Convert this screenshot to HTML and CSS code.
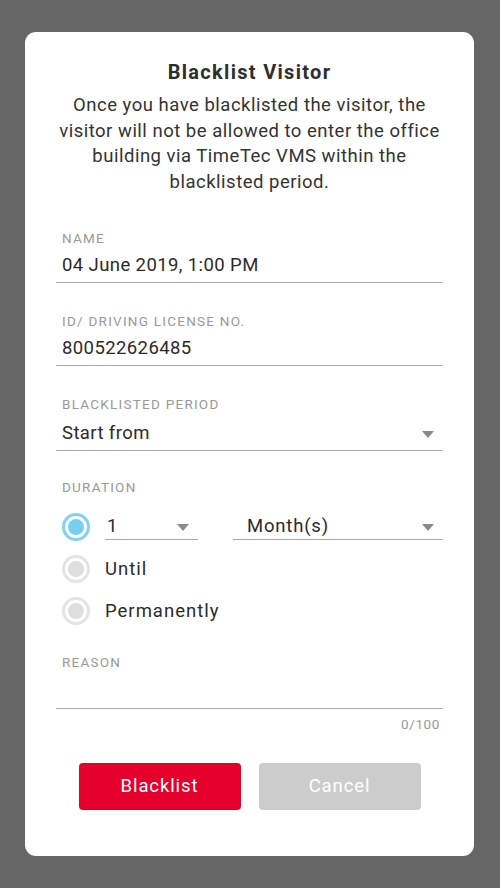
FILE: index.html
```html
<!DOCTYPE html>
<html lang="en">
<head>
<meta charset="utf-8">
<title>Blacklist Visitor</title>
<link rel="stylesheet" href="styles.css">
</head>
<body>
<div class="card">
  <h1 class="title">Blacklist Visitor</h1>
  <p class="intro">Once you have blacklisted the visitor, the<br>visitor will not be allowed to enter the office<br>building via TimeTec VMS within the<br>blacklisted period.</p>

  <div class="field">
    <div class="label">NAME</div>
    <div class="value">04 June 2019, 1:00 PM</div>
  </div>

  <div class="field">
    <div class="label">ID/ DRIVING LICENSE NO.</div>
    <div class="value">800522626485</div>
  </div>

  <div class="field">
    <div class="label">BLACKLISTED PERIOD</div>
    <div class="value select"><span>Start from</span><span class="caret"></span></div>
  </div>

  <div class="field duration">
    <div class="label">DURATION</div>
    <div class="radio-row">
      <span class="radio checked"></span>
      <div class="mini-select num"><span>1</span><span class="caret"></span></div>
      <div class="mini-select unit"><span>Month(s)</span><span class="caret"></span></div>
    </div>
    <div class="radio-row">
      <span class="radio"></span>
      <span class="radio-text">Until</span>
    </div>
    <div class="radio-row">
      <span class="radio"></span>
      <span class="radio-text">Permanently</span>
    </div>
  </div>

  <div class="field reason">
    <div class="label">REASON</div>
    <div class="textarea"></div>
    <div class="counter">0/100</div>
  </div>

  <div class="actions">
    <button class="btn primary">Blacklist</button>
    <button class="btn secondary">Cancel</button>
  </div>
</div>
</body>
</html>
```

FILE: styles.css
```css
html, body {
  margin: 0;
  padding: 0;
}
body {
  background: #666666;
  width: 500px;
  height: 888px;
  overflow: hidden;
  font-family: Roboto, "Liberation Sans", Arial, sans-serif;
  color: #333333;
}
.card {
  box-sizing: border-box;
  width: 449px;
  height: 824px;
  margin: 32px 0 0 25px;
  background: #ffffff;
  border-radius: 11px;
  padding: 28px 31px 0 31px;
}
.title {
  margin: 0;
  font-size: 20px;
  line-height: 24px;
  font-weight: 700;
  text-align: center;
  color: #2e2e2e;
  letter-spacing: 1.3px;
}
.intro {
  margin: 9px -12px 0 -12px;
  font-size: 18.5px;
  line-height: 25.7px;
  text-align: center;
  color: #333333;
  letter-spacing: 0.5px;
  white-space: nowrap;
}
.field {
  margin-top: 30px;
}
.intro + .field {
  margin-top: 34px;
}
.label {
  padding-left: 6px;
  font-size: 13.5px;
  line-height: 16px;
  color: #999999;
  letter-spacing: 1.25px;
}
.value {
  margin-top: 7px;
  font-size: 18.5px;
  line-height: 24px;
  padding: 0 9px 5px 6px;
  border-bottom: 1px solid #aaaaaa;
  color: #2b2b2b;
  letter-spacing: 0.4px;
}
.select {
  display: flex;
  align-items: center;
  justify-content: space-between;
  margin-top: 9px;
}
.caret {
  flex: none;
  width: 0;
  height: 0;
  border-left: 6px solid transparent;
  border-right: 6px solid transparent;
  border-top: 7px solid #8a8a8a;
  margin-top: 3px;
}
.duration {
  margin-top: 28px;
}
.radio-row {
  display: flex;
  align-items: center;
  height: 28px;
  margin-top: 14px;
}
.duration .label + .radio-row {
  margin-top: 18px;
}
.radio {
  box-sizing: border-box;
  flex: none;
  width: 28px;
  height: 28px;
  border-radius: 50%;
  border: 3px solid #e4e4e4;
  margin-left: 6px;
  display: flex;
  align-items: center;
  justify-content: center;
}
.radio::after {
  content: "";
  width: 16px;
  height: 16px;
  border-radius: 50%;
  background: #dedede;
}
.radio.checked {
  border-color: #80d4f2;
}
.radio.checked::after {
  background: #76cff0;
}
.radio-text {
  margin-left: 15px;
  font-size: 18.5px;
  letter-spacing: 1px;
  color: #2b2b2b;
}
.mini-select {
  box-sizing: border-box;
  height: 26px;
  display: flex;
  align-items: center;
  justify-content: space-between;
  border-bottom: 1px solid #aaaaaa;
  font-size: 18.5px;
  letter-spacing: 0.8px;
  color: #2b2b2b;
}
.mini-select.num {
  width: 93px;
  margin-left: 15px;
  padding: 0 9px 0 2px;
}
.mini-select.unit {
  width: 210px;
  margin-left: 35px;
  padding: 0 9px 0 14px;
}
.reason {
  margin-top: 29px;
}
.textarea {
  height: 38px;
  border-bottom: 1px solid #aaaaaa;
}
.counter {
  margin-top: 7px;
  text-align: right;
  padding-right: 3px;
  font-size: 13.5px;
  line-height: 16px;
  color: #999999;
  letter-spacing: 0.6px;
}
.actions {
  display: flex;
  justify-content: center;
  gap: 18px;
  margin-top: 31px;
}
.btn {
  width: 162px;
  height: 47px;
  border: none;
  border-radius: 4px;
  font-family: inherit;
  font-size: 18.5px;
  letter-spacing: 0.9px;
  color: #ffffff;
  padding: 0;
}
.btn.primary {
  background: #e4002b;
}
.btn.secondary {
  background: #cccccc;
}
```
